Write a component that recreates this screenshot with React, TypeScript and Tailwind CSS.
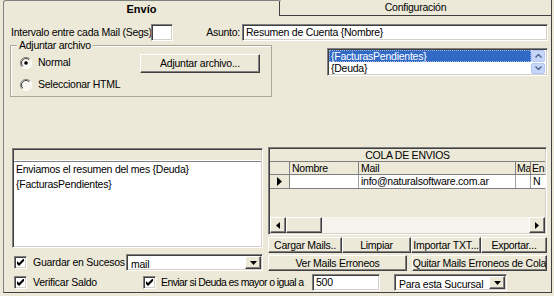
import React from "react"

const sunken =
  "border border-t-[#808080] border-l-[#808080] border-r-white border-b-white shadow-[inset_1px_1px_0_#404040,inset_-1px_-1px_0_#d4d0c8]"
const raised =
  "bg-[#ece9d8] border border-t-white border-l-white border-r-[#404040] border-b-[#404040] shadow-[inset_-1px_-1px_0_#808080]"

function CheckBox() {
  return (
    <span className={`w-[13px] h-[13px] shrink-0 bg-white flex items-center justify-center ${sunken}`}>
      <svg width="7" height="7" viewBox="0 0 7 7">
        <polygon points="0,2 2,4 7,-1 7,2 2,7 0,5" fill="#000" />
      </svg>
    </span>
  )
}

function Radio({ checked }: { checked?: boolean }) {
  return (
    <svg width="12" height="12" viewBox="0 0 12 12" className="shrink-0">
      <circle cx="6" cy="6" r="5.5" fill="#f7f6f1" />
      <path d="M10 2 A5.5 5.5 0 0 0 2 10" stroke="#8a8a80" strokeWidth="1" fill="none" />
      <path d="M9.2 2.8 A4.5 4.5 0 0 0 2.8 9.2" stroke="#404040" strokeWidth="1" fill="none" />
      <path d="M10 2 A5.5 5.5 0 0 1 2 10" stroke="#ffffff" strokeWidth="1" fill="none" />
      {checked && <circle cx="6" cy="6" r="1.8" fill="#000" />}
    </svg>
  )
}

function DropButton() {
  return (
    <span className={`w-[16px] h-full shrink-0 flex items-center justify-center ${raised}`}>
      <svg width="7" height="4" viewBox="0 0 7 4">
        <polygon points="0,0 7,0 3.5,4" fill="#000" />
      </svg>
    </span>
  )
}

function Combo({ text, className }: { text: string; className: string }) {
  return (
    <div className={`bg-white flex items-stretch p-[1px] ${sunken} ${className}`}>
      <span className="flex-1 pl-[3px] leading-[14px] pt-[1px] overflow-hidden">{text}</span>
      <DropButton />
    </div>
  )
}

function Button({ label, className }: { label: string; className: string }) {
  return (
    <div className={`flex items-center justify-center leading-none whitespace-nowrap overflow-hidden ${raised} ${className}`}>{label}</div>
  )
}

function XpArrow({ up }: { up?: boolean }) {
  return (
    <span className="w-[14px] h-[12px] rounded-[2px] bg-[#c6d6fb] border border-[#b4c8f4] flex items-center justify-center">
      <svg width="7" height="4" viewBox="0 0 7 4">
        <path d={up ? "M0.5 3.5 L3.5 0.5 L6.5 3.5" : "M0.5 0.5 L3.5 3.5 L6.5 0.5"} stroke="#4d6185" strokeWidth="1.4" fill="none" />
      </svg>
    </span>
  )
}

function QueueGrid() {
  return (
    <div className={`w-[279px] h-[88px] flex flex-col overflow-hidden bg-[#ece9d8] p-[1px] ${sunken}`}>
      <div className="h-[13px] shrink-0 border-b border-[#808080] text-center leading-[13px]">COLA DE ENVIOS</div>
      <div className="h-[13px] shrink-0 flex border-b border-[#808080] leading-[12px]">
        <span className="w-[20px] shrink-0 border-r border-[#808080]" />
        <span className="w-[69px] shrink-0 border-r border-[#808080] pl-[2px]">Nombre</span>
        <span className="w-[157px] shrink-0 border-r border-[#808080] pl-[2px]">Mail</span>
        <span className="w-[15px] shrink-0 border-r border-[#808080] pl-[1px] overflow-hidden">Ma</span>
        <span className="w-[20px] shrink-0 pl-[1px] overflow-hidden">En</span>
      </div>
      <div className="h-[14px] shrink-0 flex border-b border-[#808080] leading-[13px]">
        <span className="w-[20px] shrink-0 border-r border-[#808080] flex items-center justify-center">
          <svg width="5" height="9" viewBox="0 0 5 9">
            <polygon points="0,0 5,4.5 0,9" fill="#000" />
          </svg>
        </span>
        <span className="w-[69px] shrink-0 bg-white border-r border-[#a0a0a0]" />
        <span className="w-[157px] shrink-0 bg-white border-r border-[#a0a0a0] pl-[2px]">info@naturalsoftware.com.ar</span>
        <span className="w-[15px] shrink-0 bg-white border-r border-[#a0a0a0]" />
        <span className="w-[20px] shrink-0 bg-white pl-[2px]">N</span>
      </div>
      <div className="flex-1" />
      <div className="h-[16px] shrink-0 flex">
        <span className={`w-[16px] shrink-0 flex items-center justify-center ${raised}`}>
          <svg width="4" height="7" viewBox="0 0 4 7">
            <polygon points="4,0 0,3.5 4,7" fill="#000" />
          </svg>
        </span>
        <span className={`w-[36px] shrink-0 ${raised}`} />
        <span className="flex-1 bg-[#f4f3ee]" />
        <span className={`w-[16px] shrink-0 flex items-center justify-center ${raised}`}>
          <svg width="4" height="7" viewBox="0 0 4 7">
            <polygon points="0,0 4,3.5 0,7" fill="#000" />
          </svg>
        </span>
      </div>
    </div>
  )
}

export default function App() {
  return (
    <div className="w-[554px] h-[296px] bg-[#ece9d8] overflow-hidden text-[10.5px] tracking-[-0.25px] whitespace-nowrap text-black font-['Liberation_Sans',Arial,sans-serif] pl-[3px]">
      {/* Tabs */}
      <div className="flex h-[16px] w-[549px]">
        <div className="w-[276px] h-[17px] relative z-10 bg-[#ece9d8] border-l border-t border-[#808080] rounded-tl-[3px] flex items-center justify-center font-bold text-[11px] tracking-normal">
          Envío
        </div>
        <div className="flex-1 h-[16px] border-l border-r border-b border-[#404040] rounded-tl-[2px] flex items-center justify-center">
          Configuración
        </div>
      </div>

      {/* Page */}
      <div className="w-[549px] h-[277px] border-l border-r border-b border-l-[#808080] border-r-[#404040] border-b-[#404040] flex flex-col">
        {/* Interval / subject */}
        <div className="mt-[8px] h-[17px] flex items-center pl-[7px] pr-[3px]">
          <span className="w-[140px] shrink-0">Intervalo entre cada Mail (Segs):</span>
          <span className={`w-[22px] h-[17px] bg-white ${sunken}`} />
          <span className="ml-auto mr-[2px]">Asunto:</span>
          <span className={`w-[306px] h-[17px] bg-white pl-[3px] leading-[14px] ${sunken}`}>Resumen de Cuenta {"{Nombre}"}</span>
        </div>

        {/* Attachment group + fields list */}
        <div className="mt-[4px] flex pl-[6px] pr-[3px]">
          <div className="relative w-[262px] h-[52px] border border-[#aca899] shadow-[inset_1px_1px_0_#fff] pl-[9px] pt-[8px]">
            <span className="absolute left-[6px] top-[-7px] bg-[#ece9d8] px-[2px] leading-[12px]">Adjuntar archivo</span>
            <div className="flex items-center h-[18px]">
              <Radio checked />
              <span className="ml-[6px]">Normal</span>
              <Button label="Adjuntar archivo..." className="ml-auto mr-[11px] w-[120px] h-[19px]" />
            </div>
            <div className="flex items-center mt-[5px]">
              <Radio />
              <span className="ml-[6px]">Seleccionar HTML</span>
            </div>
          </div>
          <div className={`ml-auto mt-[3px] w-[221px] h-[28px] bg-white flex p-[1px] ${sunken}`}>
            <div className="flex-1 flex flex-col leading-[12px]">
              <span className="h-[13px] bg-[#316ac5] text-white pl-[2px] outline-1 outline-dotted outline-[#9fb8e8] -outline-offset-1">
                {"{FacturasPendientes}"}
              </span>
              <span className="h-[13px] pl-[2px]">{"{Deuda}"}</span>
            </div>
            <div className="w-[15px] flex flex-col gap-[1px]">
              <XpArrow up />
              <XpArrow />
            </div>
          </div>
        </div>

        {/* Body + queue */}
        <div className="mt-[50px] flex pl-[8px]">
          <div className="w-[251px] flex flex-col">
            <div className={`mt-[1px] h-[100px] flex flex-col bg-white p-[1px] ${sunken}`}>
              <div className="h-[12px] bg-[#ece9d8] border-b border-[#808080] shadow-[inset_0_-1px_0_#fff]" />
              <div className="px-[2px] leading-[15px]">
                Enviamos el resumen del mes {"{Deuda}"}
                <br />
                {"{FacturasPendientes}"}
              </div>
            </div>
            <div className="mt-[6px] h-[17px] flex items-center">
              <span className="ml-[2px]"><CheckBox /></span>
              <span className="ml-[6px]">Guardar en Sucesos</span>
              <Combo text="mail" className="ml-auto w-[137px] h-[17px]" />
            </div>
          </div>
          <div className="ml-[5px] w-[279px] flex flex-col">
            <QueueGrid />
            <div className="mt-[2px] flex h-[16px]">
              <Button label="Cargar Mails.." className="w-[74px] h-full" />
              <Button label="Limpiar" className="w-[69px] h-full" />
              <Button label="Importar TXT..." className="w-[70px] h-full" />
              <Button label="Exportar..." className="w-[66px] h-full" />
            </div>
            <div className="mt-[2px] flex h-[16px] gap-[5px]">
              <Button label="Ver Mails Erroneos" className="w-[139px] h-full" />
              <Button label="Quitar Mails Erroneos de Cola" className="w-[135px] h-full" />
            </div>
          </div>
        </div>

        {/* Bottom row */}
        <div className="mt-[3px] h-[17px] flex items-center pl-[10px]">
          <div className="w-[129px] flex items-center">
            <CheckBox />
            <span className="ml-[6px]">Verificar Saldo</span>
          </div>
          <CheckBox />
          <span className="ml-[5px] w-[151px] tracking-[-0.6px]">Enviar si Deuda es mayor o igual a</span>
          <span className={`w-[68px] h-[17px] bg-white pl-[3px] leading-[14px] ${sunken}`}>500</span>
          <Combo text="Para esta Sucursal" className="ml-[14px] w-[113px] h-[17px]" />
        </div>
      </div>
    </div>
  )
}
